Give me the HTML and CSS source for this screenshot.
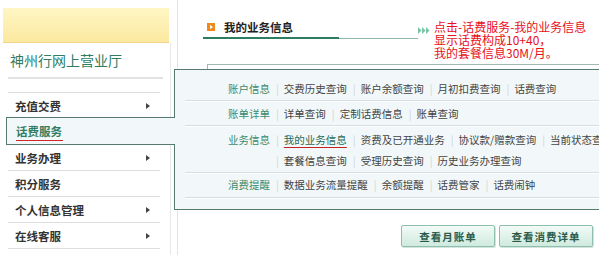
FILE: index.html
```html
<!DOCTYPE html>
<html lang="zh-CN">

<head>
    <meta charset="UTF-8">
    <title>神州行网上营业厅</title>
    <link rel="stylesheet" href="styles.css">
</head>

<body>

    <div class="page">
        <aside class="sidebar">
            <div class="banner"></div>
            <div class="side-body">
                <h2 class="brand">神州行网上营业厅</h2>
                <ul class="menu">
                    <li class="has-sub">充值交费</li>
                    <li class="active"><span>话费服务</span></li>
                    <li class="has-sub">业务办理</li>
                    <li>积分服务</li>
                    <li class="has-sub">个人信息管理</li>
                    <li class="has-sub">在线客服</li>
                </ul>
            </div>
        </aside>

        <main class="main">
            <div class="head">
                <div class="head-title">
                    <span class="head-icon"></span>
                    我的业务信息
                </div>
                <div class="head-rule"></div>
                <svg class="head-arrows" width="12" height="7" viewBox="0 0 12 7">
                    <polygon points="0,0 3.5,3.5 0,7" fill="#7cc4a4" />
                    <polygon points="4,0 7.5,3.5 4,7" fill="#7cc4a4" />
                    <polygon points="8,0 11.5,3.5 8,7" fill="#7cc4a4" />
                </svg>
                <div class="note">
                    点击-话费服务-我的业务信息<br>
                    显示话费构成10+40，<br>
                    我的套餐信息30M/月。
                </div>
            </div>
            <div class="box-edge"></div>
            <div class="actions">
                <button class="btn">查看月账单</button>
                <button class="btn">查看消费详单</button>
            </div>
        </main>

        <!-- 话费服务 弹出菜单 -->
        <div class="flyout">
            <div class="fly-row first">
                <div class="fly-label">账户信息</div>
                <div class="fly-links">
                    <a>交费历史查询</a><a>账户余额查询</a><a>月初扣费查询</a><a>话费查询</a>
                </div>
            </div>
            <div class="fly-row">
                <div class="fly-label">账单详单</div>
                <div class="fly-links">
                    <a>详单查询</a><a>定制话费信息</a><a>账单查询</a>
                </div>
            </div>
            <div class="fly-row double">
                <div class="fly-label">业务信息</div>
                <div class="fly-links">
                    <a class="current">我的业务信息</a><a>资费及已开通业务</a><a>协议款/赠款查询</a><a>当前状态查询</a>
                </div>
                <div class="fly-links second">
                    <a>套餐信息查询</a><a>受理历史查询</a><a>历史业务办理查询</a>
                </div>
            </div>
            <div class="fly-row last">
                <div class="fly-label">消费提醒</div>
                <div class="fly-links">
                    <a>数据业务流量提醒</a><a>余额提醒</a><a>话费管家</a><a>话费闹钟</a>
                </div>
            </div>
        </div>
    </div>

</body>

</html>
```

FILE: styles.css
```css
body {
    margin: 0;
    background-color: #fff;
    font-family: "Noto Sans CJK SC", "Liberation Sans", sans-serif;
    color: #333;
}

.page {
    display: flex;
    width: 599px;
    height: 255px;
    overflow: hidden;
    position: relative;
}

/* 左侧菜单 */
.sidebar {
    width: 171px;
    flex-shrink: 0;
    display: flex;
    flex-direction: column;
}

.banner {
    margin: 8px 0 0 3px;
    width: 166px;
    height: 34px;
    background: linear-gradient(#fef6c4, #fce9a0);
    border-bottom: 1px solid #f4d489;
}

.side-body {
    flex: 1;
    border-right: 1px solid #e8e8e8;
}

.brand {
    box-sizing: border-box;
    height: 36px;
    margin: 0 7px 0 8px;
    padding-left: 2px;
    border-bottom: 2px solid #e2e2e2;
    font-size: 14px;
    font-weight: normal;
    line-height: 34px;
    color: #2f7d62;
}

.menu {
    list-style: none;
    margin: 13px 10px 0 8px;
    padding: 0;
    border-top: 1px solid #dedede;
}

.menu li {
    box-sizing: border-box;
    height: 26px;
    padding: 0 10px 0 7px;
    border-bottom: 1px solid #dedede;
    display: flex;
    align-items: center;
    justify-content: space-between;
    font-size: 11.5px;
    font-weight: bold;
    color: #333;
}

.menu li.has-sub::after {
    content: "";
    border-left: 4px solid #444;
    border-top: 3px solid transparent;
    border-bottom: 3px solid transparent;
}

/* 当前选中项与弹出层相连 */
.menu li.active {
    position: relative;
    z-index: 3;
    width: 169px;
    height: 28px;
    margin: -2px 0 0 -2px;
    padding-left: 9px;
    border: 1px solid #557a6e;
    border-right: none;
    background-color: #f2f8f9;
    color: #2f7d62;
}

.menu li.active span {
    border-bottom: 1px solid #cc2a2a;
    padding: 0 1px 1px 0;
    margin-top: 2px;
}

/* 右侧内容 */
.main {
    flex: 1;
    margin-left: 6px;
    border-left: 1px solid #e4e4e4;
    padding-top: 17px;
}

.head {
    display: flex;
    align-items: flex-start;
    height: 47px;
    margin-left: 25px;
}

.head-title {
    box-sizing: border-box;
    width: 136px;
    height: 22px;
    padding-left: 4px;
    border-bottom: 2px solid #2e7d63;
    display: flex;
    align-items: center;
    font-size: 11.5px;
    font-weight: bold;
    color: #222;
}

.head-icon {
    width: 8px;
    height: 8px;
    margin-right: 9px;
    background-color: #f08a1c;
    position: relative;
}

.head-icon::after {
    content: "";
    position: absolute;
    left: 3px;
    top: 2px;
    border-left: 3px solid #fff;
    border-top: 2px solid transparent;
    border-bottom: 2px solid transparent;
}

.head-rule {
    width: 79px;
    height: 21px;
    border-bottom: 1px solid #8fb5a5;
}

.head-arrows {
    margin: 10px 4px 0 0;
}

.note {
    margin-top: 3px;
    font-size: 12px;
    line-height: 13px;
    color: #e8101a;
    white-space: nowrap;
}

.box-edge {
    height: 10px;
    margin-left: 29px;
    border-top: 1px solid #a3b8b0;
    border-left: 1px solid #a3b8b0;
}

.actions {
    display: flex;
    justify-content: flex-end;
    gap: 4px;
    margin-top: 150px;
    padding-right: 6px;
}

.btn {
    width: 94px;
    height: 22px;
    padding: 0;
    border: 1px solid #8cc0ad;
    border-radius: 2px;
    background: linear-gradient(#f2fbf7, #cfeadf);
    font-family: inherit;
    font-size: 10.5px;
    font-weight: bold;
    letter-spacing: 1px;
    color: #2b5c4b;
    box-shadow: 1px 1px 0 #d4e4de;
}

/* 弹出菜单 */
.flyout {
    position: absolute;
    left: 174px;
    top: 69px;
    z-index: 2;
    box-sizing: border-box;
    width: 440px;
    height: 141px;
    padding-left: 10px;
    border: 1px solid #557a6e;
    background-color: #f2f8f9;
}

.fly-row {
    display: grid;
    grid-template-columns: 85px auto;
    padding: 3px 0 1px;
    border-bottom: 1px solid #d5dfdf;
    box-shadow: 0 1px 0 #fff;
    font-size: 10.5px;
    line-height: 20px;
    white-space: nowrap;
}

.fly-row.first {
    padding-top: 9px;
}

.fly-row.double {
    line-height: 21px;
}

.fly-row.last {
    padding: 2px 0;
}

.fly-label {
    text-align: right;
    color: #3a8a6e;
}

.fly-links.second {
    grid-column: 2;
}

.fly-links a {
    color: #444;
}

.fly-links a::before {
    content: "|";
    display: inline-block;
    margin: 0 5px 0 6px;
    color: #d0d6d6;
}

.fly-links a.current {
    color: #2b6a55;
    text-decoration: underline;
    text-decoration-color: #c42323;
    text-underline-offset: 3px;
}
```
